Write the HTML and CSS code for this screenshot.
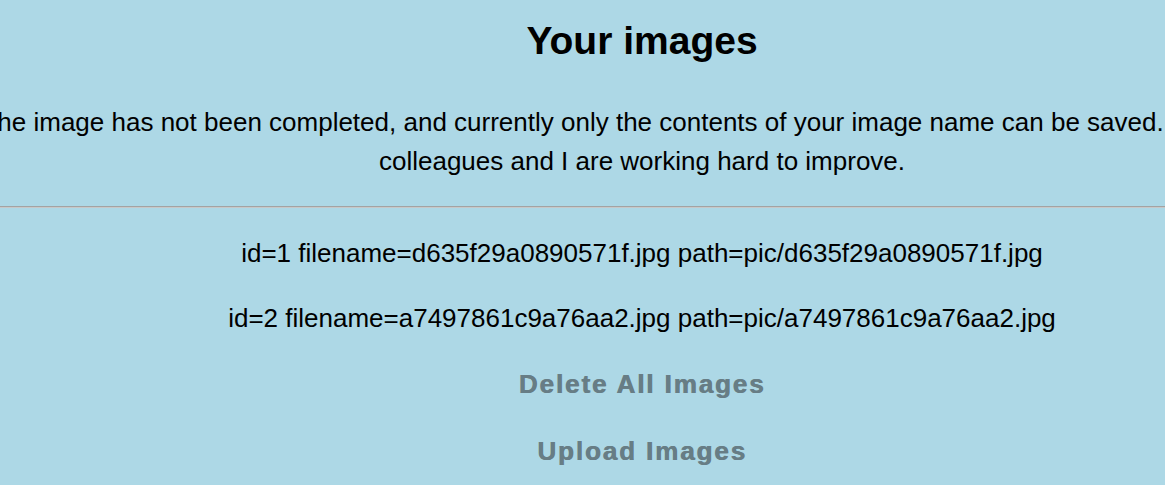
FILE: index.html
```html
<!DOCTYPE html>
<html lang="en">
<head>
<meta charset="utf-8">
<title>Your images</title>
<link rel="stylesheet" href="styles.css">
</head>
<body>
<div class="page">
  <h1 class="title">Your images</h1>
  <p class="notice">The image has not been completed, and currently only the contents of your image name can be saved. My colleagues and I are working hard to improve.</p>
  <hr class="divider">
  <ul class="image-list">
    <li class="image-item">id=1 filename=d635f29a0890571f.jpg path=pic/d635f29a0890571f.jpg</li>
    <li class="image-item">id=2 filename=a7497861c9a76aa2.jpg path=pic/a7497861c9a76aa2.jpg</li>
  </ul>
  <div class="actions">
    <a class="action" href="#">Delete All Images</a>
    <a class="action" href="#">Upload Images</a>
  </div>
</div>
</body>
</html>
```
FILE: styles.css
```css
html, body {
  margin: 0;
  padding: 0;
  background: #add8e6;
  overflow: hidden;
}

.page {
  width: 1284px;
  text-align: center;
  font-family: "Liberation Sans", Arial, sans-serif;
  color: #000;
  padding-top: 19px;
}

.title {
  margin: 0;
  font-size: 39px;
  font-weight: bold;
  line-height: normal;
}

.notice {
  width: 1160px;
  margin: 40px auto 25px;
  font-size: 26px;
  line-height: 39px;
  text-indent: -97px;
}

.divider {
  margin: 0;
  height: 0;
  border: none;
  border-top: 1px solid #a3a3a3;
  border-bottom: 1px solid #c8c8c8;
}

.image-list {
  list-style: none;
  margin: 26px 0 0;
  padding: 0;
  display: flex;
  flex-direction: column;
  gap: 26px;
}

.image-item {
  font-size: 26px;
  line-height: 39px;
}

.actions {
  display: flex;
  flex-direction: column;
  align-items: center;
  gap: 28px;
  margin-top: 27px;
}

.action {
  font-size: 26px;
  line-height: 39px;
  font-weight: bold;
  letter-spacing: 1.9px;
  color: #677d85;
  text-decoration: none;
  text-shadow: 0.7px 0 0 #677d85;
}
```
